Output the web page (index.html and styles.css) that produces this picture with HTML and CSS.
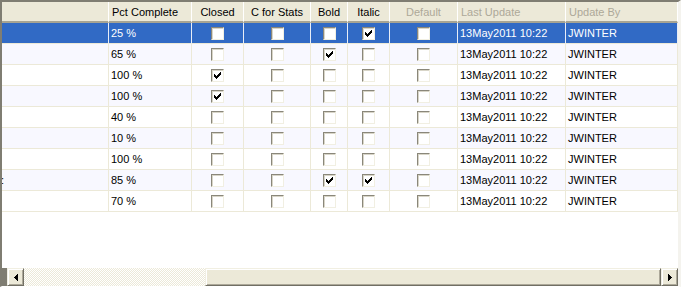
FILE: index.html
```html
<!DOCTYPE html>
<html lang="en">
<head>
    <meta charset="UTF-8">
    <title>Tasks</title>
    <link rel="stylesheet" href="styles.css">
</head>
<body>

    <div class="grid">
        <table class="rows">
            <thead>
                <tr>
                    <th class="c-key"></th>
                    <th class="c-pct">Pct Complete</th>
                    <th class="c-closed mid">Closed</th>
                    <th class="c-stats mid">C for Stats</th>
                    <th class="c-bold mid">Bold</th>
                    <th class="c-italic mid">Italic</th>
                    <th class="c-default mid off">Default</th>
                    <th class="c-last off">Last Update</th>
                    <th class="c-by off">Update By</th>
                </tr>
            </thead>
            <tbody>
                <tr class="selected">
                    <td></td><td>25 %</td>
                    <td><span class="box"></span></td>
                    <td><span class="box"></span></td>
                    <td><span class="box"></span></td>
                    <td><span class="box"><svg viewBox="0 0 7 7"><path d="M0 2H1V3H2V4H3V3H4V2H5V1H6V0H7V3H6V4H5V5H4V6H3V7H2V6H1V5H0Z"/></svg></span></td>
                    <td><span class="box"></span></td>
                    <td>13May2011 10:22</td><td>JWINTER</td>
                </tr>
                <tr>
                    <td></td><td>65 %</td>
                    <td><span class="box"></span></td>
                    <td><span class="box"></span></td>
                    <td><span class="box"><svg viewBox="0 0 7 7"><path d="M0 2H1V3H2V4H3V3H4V2H5V1H6V0H7V3H6V4H5V5H4V6H3V7H2V6H1V5H0Z"/></svg></span></td>
                    <td><span class="box"></span></td>
                    <td><span class="box"></span></td>
                    <td>13May2011 10:22</td><td>JWINTER</td>
                </tr>
                <tr>
                    <td></td><td>100 %</td>
                    <td><span class="box"><svg viewBox="0 0 7 7"><path d="M0 2H1V3H2V4H3V3H4V2H5V1H6V0H7V3H6V4H5V5H4V6H3V7H2V6H1V5H0Z"/></svg></span></td>
                    <td><span class="box"></span></td>
                    <td><span class="box"></span></td>
                    <td><span class="box"></span></td>
                    <td><span class="box"></span></td>
                    <td>13May2011 10:22</td><td>JWINTER</td>
                </tr>
                <tr>
                    <td></td><td>100 %</td>
                    <td><span class="box"><svg viewBox="0 0 7 7"><path d="M0 2H1V3H2V4H3V3H4V2H5V1H6V0H7V3H6V4H5V5H4V6H3V7H2V6H1V5H0Z"/></svg></span></td>
                    <td><span class="box"></span></td>
                    <td><span class="box"></span></td>
                    <td><span class="box"></span></td>
                    <td><span class="box"></span></td>
                    <td>13May2011 10:22</td><td>JWINTER</td>
                </tr>
                <tr>
                    <td></td><td>40 %</td>
                    <td><span class="box"></span></td>
                    <td><span class="box"></span></td>
                    <td><span class="box"></span></td>
                    <td><span class="box"></span></td>
                    <td><span class="box"></span></td>
                    <td>13May2011 10:22</td><td>JWINTER</td>
                </tr>
                <tr>
                    <td></td><td>10 %</td>
                    <td><span class="box"></span></td>
                    <td><span class="box"></span></td>
                    <td><span class="box"></span></td>
                    <td><span class="box"></span></td>
                    <td><span class="box"></span></td>
                    <td>13May2011 10:22</td><td>JWINTER</td>
                </tr>
                <tr>
                    <td></td><td>100 %</td>
                    <td><span class="box"></span></td>
                    <td><span class="box"></span></td>
                    <td><span class="box"></span></td>
                    <td><span class="box"></span></td>
                    <td><span class="box"></span></td>
                    <td>13May2011 10:22</td><td>JWINTER</td>
                </tr>
                <tr>
                    <td class="key">:</td><td>85 %</td>
                    <td><span class="box"></span></td>
                    <td><span class="box"></span></td>
                    <td><span class="box"><svg viewBox="0 0 7 7"><path d="M0 2H1V3H2V4H3V3H4V2H5V1H6V0H7V3H6V4H5V5H4V6H3V7H2V6H1V5H0Z"/></svg></span></td>
                    <td><span class="box"><svg viewBox="0 0 7 7"><path d="M0 2H1V3H2V4H3V3H4V2H5V1H6V0H7V3H6V4H5V5H4V6H3V7H2V6H1V5H0Z"/></svg></span></td>
                    <td><span class="box"></span></td>
                    <td>13May2011 10:22</td><td>JWINTER</td>
                </tr>
                <tr>
                    <td></td><td>70 %</td>
                    <td><span class="box"></span></td>
                    <td><span class="box"></span></td>
                    <td><span class="box"></span></td>
                    <td><span class="box"></span></td>
                    <td><span class="box"></span></td>
                    <td>13May2011 10:22</td><td>JWINTER</td>
                </tr>
            </tbody>
        </table>

        <div class="empty"></div>

        <!-- horizontal scroll bar -->
        <div class="hscroll">
            <div class="edge"></div>
            <div class="btn">
                <svg class="arrow" width="4" height="7" viewBox="0 0 4 7"><path d="M3 0H4V7H3V6H2V5H1V4H0V3H1V2H2V1H3Z"/></svg>
            </div>
            <div class="track"></div>
            <div class="thumb"></div>
            <div class="btn">
                <svg class="arrow" width="4" height="7" viewBox="0 0 4 7"><path d="M0 0H1V1H2V2H3V3H4V4H3V5H2V6H1V7H0Z"/></svg>
            </div>
        </div>
    </div>

</body>
</html>
```

FILE: styles.css
```css
body {
    margin: 0;
    font-family: "Liberation Sans", Arial, sans-serif;
    font-size: 11px;
    color: #000;
}
.grid {
    width: 681px;
    height: 287px;
    box-sizing: border-box;
    border-style: solid;
    border-width: 2px 3px 1px 2px;
    border-color: #7f7d72 #f4f3ee #ffffff #7f7d72;
    background: #fff;
    display: flex;
    flex-direction: column;
}
.rows {
    width: 676px;
    border-collapse: separate;
    border-spacing: 0;
    table-layout: fixed;
}
th, td {
    box-sizing: border-box;
    padding: 0 2px;
    white-space: nowrap;
    overflow: hidden;
    text-align: left;
}
th {
    height: 21px;
    padding: 0 3px;
    background: #ece9d8;
    font-weight: normal;
    border-right: 1px solid #fff;
    border-bottom: 2px solid #a7a493;
}
th.mid {
    text-align: center;
}
th.off {
    color: #aca899;
}
.c-key { width: 107px; }
.c-pct { width: 83px; }
.c-closed { width: 52px; }
.c-stats { width: 67px; }
.c-bold { width: 37px; }
.c-italic { width: 42px; }
.c-default { width: 68px; }
.c-last { width: 108px; }
.c-by { width: 112px; }

td {
    height: 21px;
    border-right: 1px solid #ece9d8;
    border-bottom: 1px solid #ece9d8;
    vertical-align: middle;
}
tbody tr:nth-child(even) td {
    background: #f8f8ff;
}
tr.selected td {
    background: #316ac5;
    color: #fff;
    border-right-color: #e8edf7;
}
td.key {
    padding: 0;
    text-indent: -1px;
}

/* checkbox cells */
.box {
    display: block;
    width: 13px;
    height: 13px;
    margin: 0 auto;
    box-sizing: border-box;
    border: 1px solid;
    border-color: #8a877a #f1efe2 #f1efe2 #8a877a;
    box-shadow: inset 1px 1px 0 #d8d5c8;
    background: #fff;
    position: relative;
}
.box svg {
    position: absolute;
    left: 2px;
    top: 2px;
    width: 7px;
    height: 7px;
    fill: #000;
    shape-rendering: crispEdges;
}

.empty {
    flex: 1;
}

/* scroll bar */
.hscroll {
    display: flex;
    height: 18px;
}
.edge {
    width: 5px;
    background: #7f7d72;
}
.btn, .thumb {
    box-sizing: border-box;
    background: #ece9d8;
    border: 1px solid;
    border-color: #f1efe2 #716f64 #716f64 #f1efe2;
    box-shadow: inset 1px 1px 0 #fff, inset -1px -1px 0 #aca899;
}
.btn {
    width: 17px;
    display: flex;
    align-items: center;
    justify-content: center;
}
.arrow {
    fill: #000;
    shape-rendering: crispEdges;
}
.track {
    width: 181px;
    background: repeating-conic-gradient(#ece9d8 0 25%, #fff 0 50%) 0 0 / 2px 2px;
}
.thumb {
    flex: 1;
}
```
